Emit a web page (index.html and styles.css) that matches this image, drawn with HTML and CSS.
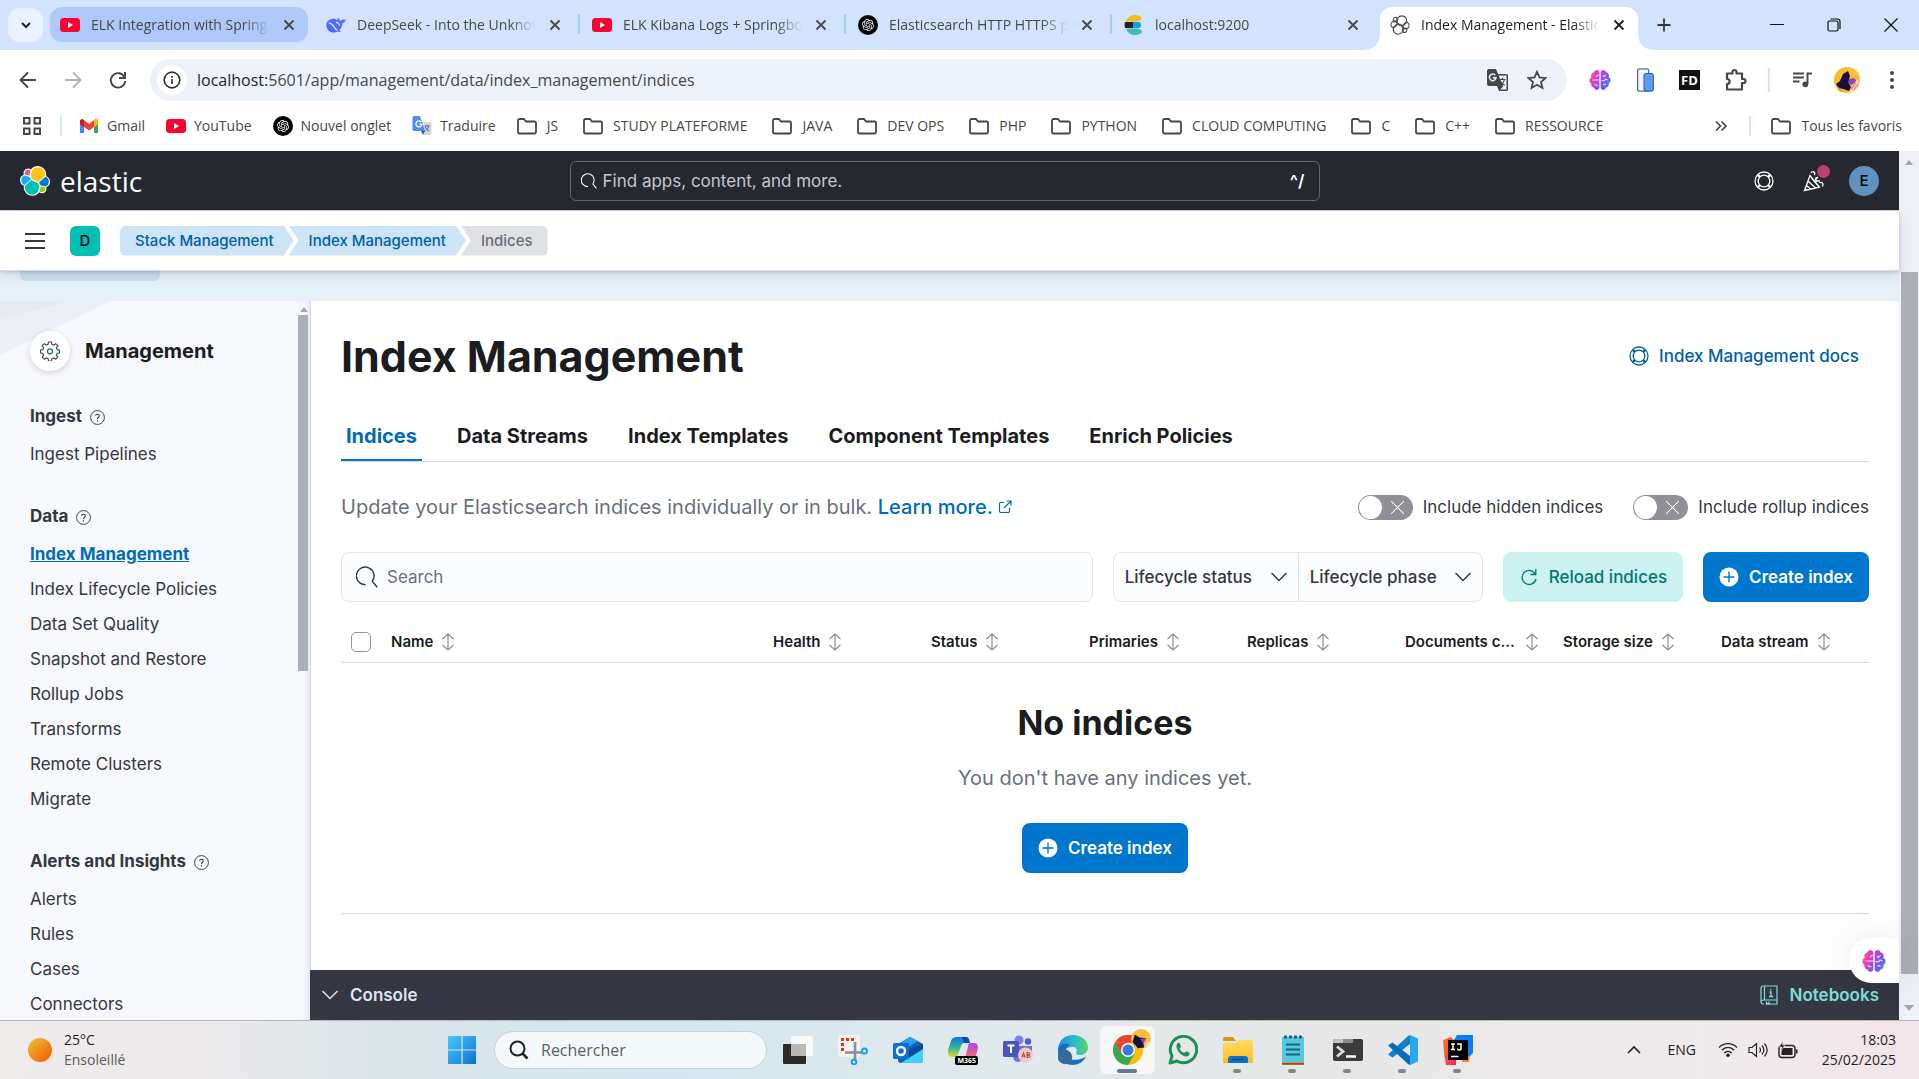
FILE: index.html
```html
<!DOCTYPE html>
<html lang="en">
<head>
<meta charset="utf-8">
<title>Index Management - Elastic</title>
<link rel="stylesheet" href="styles.css">
</head>
<body>
<svg class="sprite" aria-hidden="true">
  <defs>
    <linearGradient id="g-brain-l" x1="0" y1="0" x2="1" y2="1"><stop offset="0" stop-color="#fa9a2a"/><stop offset=".45" stop-color="#ef35c0"/><stop offset="1" stop-color="#6a5cf5"/></linearGradient>
    <linearGradient id="g-brain-r" x1="0" y1="0" x2="1" y2="1"><stop offset="0" stop-color="#d83bd8"/><stop offset=".5" stop-color="#7a55f2"/><stop offset="1" stop-color="#1c9bff"/></linearGradient>
    <linearGradient id="g-sun" x1="0" y1="0" x2="1" y2="1"><stop offset="0" stop-color="#edc52f"/><stop offset=".75" stop-color="#f2700f"/><stop offset="1" stop-color="#ee6510"/></linearGradient>
    <linearGradient id="g-win" x1="0" y1="0" x2="1" y2="1"><stop offset="0" stop-color="#4cc9fb"/><stop offset="1" stop-color="#0873cf"/></linearGradient>
    <linearGradient id="g-edge" x1="0" y1="0" x2="1" y2="0"><stop offset="0" stop-color="#1b8de0"/><stop offset=".6" stop-color="#2cc0c8"/><stop offset="1" stop-color="#5ad65c"/></linearGradient>
    <linearGradient id="g-cop" x1="0" y1="0" x2="0" y2="1"><stop offset="0" stop-color="#1578e0"/><stop offset=".5" stop-color="#25b49a"/><stop offset="1" stop-color="#e8d43a"/></linearGradient>
    <linearGradient id="g-cop2" x1="0" y1="0" x2="0" y2="1"><stop offset="0" stop-color="#a24df0"/><stop offset=".6" stop-color="#f0608a"/><stop offset="1" stop-color="#fa9a55"/></linearGradient>
    <linearGradient id="g-ij" x1="0" y1="0" x2="1" y2="1"><stop offset="0" stop-color="#ff7a1a"/><stop offset="1" stop-color="#fd2160"/></linearGradient>
    <linearGradient id="g-file" x1="0" y1="0" x2="0" y2="1"><stop offset="0" stop-color="#ffdc62"/><stop offset="1" stop-color="#fbbd22"/></linearGradient>

    <symbol id="i-youtube" viewBox="0 0 20 20"><rect y="3" width="20" height="14" rx="3.5" fill="#ff0033"/><path d="M8 7v6l5-3z" fill="#fff"/></symbol>
    <symbol id="i-x" viewBox="0 0 16 16"><path d="M3.5 3.5l9 9m0-9l-9 9" stroke="currentColor" stroke-width="1.8"/></symbol>
    <symbol id="i-deepseek" viewBox="0 0 20 20"><path fill="#4d6bfe" d="M19.7 4.2c-.9.6-1.700.5-2.700.3-1 .1-1.500 1-2 1.400C14 5 12.600 4.300 12.200 2.300c-.8 1-.9 2-.3 3.200C9 2.800 4 3.400 1.600 6.200-.9 9.400.4 14 3.500 16.200c2.600 1.900 6 1.700 8.300.4 1.200.5 2.500.5 3.200-.1-.7-.2-1.200-.6-1.600-1.200 2-2 3-4.500 3-7.200 1.700-.2 3-1.700 3.300-3.900z"/><path d="M2.700 8c3 .3 4.500 2.200 5.700 4.400.8 1.400 1.700 2.300 3 3M10 7.600c1.800-.3 3.600 1 3.400 3.200" fill="none" stroke="#d3e3fd" stroke-width="1.400"/></symbol>
    <symbol id="i-gpt" viewBox="0 0 40 40"><circle cx="20" cy="20" r="20" fill="#050505"/><path transform="translate(8 8)" fill="#fff" d="M22.2819 9.8211a5.9847 5.9847 0 0 0-.5157-4.9108 6.0462 6.0462 0 0 0-6.5098-2.9A6.0651 6.0651 0 0 0 4.9807 4.1818a5.9847 5.9847 0 0 0-3.9977 2.9 6.0462 6.0462 0 0 0 .7427 7.0966 5.98 5.98 0 0 0 .511 4.9107 6.051 6.051 0 0 0 6.5146 2.9001A5.9847 5.9847 0 0 0 13.2599 24a6.0557 6.0557 0 0 0 5.7718-4.2058 5.9894 5.9894 0 0 0 3.9977-2.9001 6.0557 6.0557 0 0 0-.7475-7.0729zm-9.022 12.6081a4.4755 4.4755 0 0 1-2.8764-1.0408l.1419-.0804 4.7783-2.7582a.7948.7948 0 0 0 .3927-.6813v-6.7369l2.02 1.1686a.071.071 0 0 1 .038.052v5.5826a4.504 4.504 0 0 1-4.4945 4.4944zm-9.6607-4.1254a4.4708 4.4708 0 0 1-.5346-3.0137l.142.0852 4.783 2.7582a.7712.7712 0 0 0 .7806 0l5.8428-3.3685v2.3324a.0804.0804 0 0 1-.0332.0615L9.74 19.9502a4.4992 4.4992 0 0 1-6.1408-1.6464zM2.3408 7.8956a4.485 4.485 0 0 1 2.3655-1.9728V11.6a.7664.7664 0 0 0 .3879.6765l5.8144 3.3543-2.0201 1.1685a.0757.0757 0 0 1-.071 0l-4.8303-2.7865A4.504 4.504 0 0 1 2.3408 7.872zm16.5963 3.8558L13.1038 8.364 15.1192 7.2a.0757.0757 0 0 1 .071 0l4.8303 2.7913a4.4944 4.4944 0 0 1-.6765 8.1042v-5.6772a.79.79 0 0 0-.407-.667zm2.0107-3.0231l-.142-.0852-4.7735-2.7818a.7759.7759 0 0 0-.7854 0L9.409 9.2297V6.8974a.0662.0662 0 0 1 .0284-.0615l4.8303-2.7866a4.4992 4.4992 0 0 1 6.6802 4.66zM8.3065 12.863l-2.02-1.1638a.0804.0804 0 0 1-.038-.0567V6.0742a4.4992 4.4992 0 0 1 7.3757-3.4537l-.142.0805L8.704 5.459a.7948.7948 0 0 0-.3927.6813zm1.0976-2.3654l2.602-1.4998 2.6069 1.4998v2.9994l-2.5974 1.4997-2.6067-1.4997Z"/></symbol>
    <symbol id="i-es" viewBox="0 0 20 20"><path d="M2 6.500C3 2.500 6.500 0 11 0c3.300 0 5.800 1.200 7.300 3.300C17 5.300 15 6.500 12.500 6.500z" fill="#f4bd19"/><path d="M1 7h8v6H1a10 10 0 0 1 0-6z" fill="#222"/><path d="M9 7h5a3 3 0 0 1 0 6H9z" fill="#07a5de"/><path d="M2 13.500h10.500c2.500 0 4.500 1.200 5.800 3.200C16.800 18.800 14.300 20 11 20c-4.500 0-8-2.500-9-6.500z" fill="#3cbeb1"/></symbol>
    <symbol id="i-elastic-o" viewBox="0 0 32 32"><g fill="none" stroke="#4a4b4f" stroke-width="1.800"><path d="M12.580 13.787l7.002 3.211 7.066-6.213c1-5-2.800-9.300-7.600-9.300-2.600 0-5 1.300-6.400 3.400L11.490 10.940z"/><path d="M5.333 21.215c-1 4.900 2.700 9.400 7.600 9.400 2.600 0 5-1.300 6.400-3.400l1.160-6.100-1.500-3-7-3.200z"/><path d="M5.300 9.060l4.800 1.140 1.050-5.470C8 2.500 3.800 5.200 5.300 9.060zM4.870 10.210c-4.600 1.700-4.700 8.500 0 10.200l6.700-6-1.200-2.700zM20.870 27.150c3.100 2.300 7.300-.5 5.800-4.400l-4.800-1.100zM21.850 20.560l5.300 1.240c4.600-1.700 4.700-8.500 0-10.200l-6.900 6z"/></g></symbol>
    <symbol id="i-elastic" viewBox="0 0 32 32"><path fill="#FFF" d="M32 16.770c0-2.678-1.664-5.027-4.169-5.907.112-.574.166-1.153.166-1.757C27.997 4.090 23.913 0 18.900 0a9.080 9.080 0 0 0-7.350 3.742 4.800 4.800 0 0 0-2.953-1.005 4.828 4.828 0 0 0-4.530 6.480A6.270 6.270 0 0 0 0 15.103c0 2.690 1.672 5.046 4.188 5.927a9 9 0 0 0-.168 1.757c0 4.999 4.070 9.068 9.067 9.068a9.060 9.060 0 0 0 7.345-3.752 4.800 4.800 0 0 0 2.970 1.030 4.828 4.828 0 0 0 4.530-6.481A6.270 6.270 0 0 0 32 16.770"/><path fill="#FEC514" d="M12.580 13.787l7.002 3.211 7.066-6.213a7.800 7.800 0 0 0 .152-1.557c0-4.287-3.476-7.775-7.748-7.775a7.720 7.720 0 0 0-6.385 3.378L11.490 10.940z"/><path fill="#00BFB3" d="M5.333 21.215a7.900 7.900 0 0 0-.152 1.570c0 4.300 3.488 7.798 7.775 7.798 2.574 0 4.985-1.287 6.431-3.431l1.160-6.036-1.555-2.982-7.030-3.213z"/><path fill="#F04E98" d="M5.288 9.067l4.800 1.137 1.050-5.473a3.790 3.790 0 0 0-2.296-.775 3.810 3.810 0 0 0-3.800 3.810c0 .450.089.900.246 1.300"/><path fill="#1BA9F5" d="M4.870 10.210a5.470 5.470 0 0 0-3.536 5.120 5.460 5.460 0 0 0 3.490 5.096l6.733-6.106-1.235-2.647z"/><path fill="#93C90E" d="M20.875 27.152a3.800 3.800 0 0 0 2.280.776 3.810 3.810 0 0 0 3.800-3.810c0-.462-.078-.914-.237-1.332l-4.790-1.125z"/><path fill="#07C" d="M21.848 20.563l5.280 1.236a5.480 5.480 0 0 0 3.535-5.120 5.460 5.460 0 0 0-3.493-5.095l-6.905 6.063z"/></symbol>
    <symbol id="i-folder" viewBox="0 0 20 20"><path d="M1 4.500A1.500 1.500 0 0 1 2.500 3H7l2 2.500h8.500A1.500 1.500 0 0 1 19 7v9a1.500 1.500 0 0 1-1.500 1.500h-15A1.500 1.500 0 0 1 1 16z" fill="none" stroke="currentColor" stroke-width="1.800"/></symbol>
    <symbol id="i-gmail" viewBox="0 0 20 20"><path d="M1 17V5l4 3v9z" fill="#4285f4"/><path d="M19 17V5l-4 3v9z" fill="#34a853"/><path d="M1 5.500C1 3 3.500 2.500 5 4l5 4 5-4c1.500-1.500 4-1 4 1.500V8l-9 6.500L1 8z" fill="#ea4335"/><path d="M15 4c1.500-1.500 4-1 4 1.500V8l-4 3z" fill="#fbbc04"/><path d="M1 5.500C1 3 3.500 2.500 5 4v7L1 8z" fill="#c5221f"/></symbol>
    <symbol id="i-gtrans" viewBox="0 0 20 20"><path d="M9 6h9a1.500 1.500 0 0 1 1.500 1.500v10A1.500 1.500 0 0 1 18 19h-6z" fill="#d5d7da"/><path d="M2 0h6l5 15H2a1.500 1.500 0 0 1-1.500-1.500v-12A1.500 1.500 0 0 1 2 0z" fill="#4d8df6"/><path d="M9 15h4l-2 4z" fill="#2a56c6"/><path d="M9.300 6.100a3 3 0 1 0 .6 2H7.300" fill="none" stroke="#fff" stroke-width="1.300"/><path d="M12.500 10h5M15 9v1m1.800 0c-.3 2-1.800 4-3.300 5m-.2-4c.5 1.600 2 3.200 3.600 4" fill="none" stroke="#5f6368" stroke-width="1"/></symbol>
    <symbol id="i-trans" viewBox="0 0 22 24"><path d="M2 1h7l2 5h8.500A1.500 1.500 0 0 1 21 7.500v14a1.500 1.500 0 0 1-1.500 1.500H12l-2-5H2a2 2 0 0 1-2-2V3a2 2 0 0 1 2-2z" fill="#474747"/><path d="M11.700 7.500H19.500v14h-6.300l3-3z" fill="#ecf0fa"/><path d="M8.200 7.200a3.300 3.300 0 1 0 .8 2.500H5.700" fill="none" stroke="#ecf0fa" stroke-width="1.500"/><path d="M12.500 11.500h6M15.500 10v1.500m2 0c-.4 2.200-2 4.500-4 5.700m-.3-4.200c.6 1.600 2.400 3.400 4.600 4.200" fill="none" stroke="#474747" stroke-width="1.200"/></symbol>
    <symbol id="i-brain" viewBox="0 0 24 24"><path d="M11.300 3.200C10 0 6 .5 5.300 3.500 2.300 4 1.700 7 2.700 8.700-.3 10-.3 14.500 2.500 15.700c-.6 2.500 1 4.500 3 4.700.8 3 4.800 3.300 5.800.3z" fill="url(#g-brain-l)"/><path d="M12.700 3.200C14 0 18 .5 18.700 3.500c3 .5 3.600 3.500 2.600 5.200 3 1.300 3 5.800.2 7 .6 2.500-1 4.500-3 4.700-.8 3-4.800 3.300-5.800.3z" fill="url(#g-brain-r)"/><path d="M11 6.500c-1.500 0-2.700.7-3 2M3.500 12H11M6 16c.5 1.700 2 2 3.500 1.500M15 7l1.500 1.500L18.500 6M13.500 12.500c2 0 2 1 3.500 0l1-1.500 2.500 1M15.500 17.500l1.500-1 1.500 1" fill="none" stroke="#fff" stroke-opacity=".85" stroke-width="1.100"/></symbol>
    <symbol id="i-phone" viewBox="0 0 20 26"><rect x="2" y="1" width="12" height="24" rx="2" fill="#f3f6fc" stroke="#53709e" stroke-width="1.500"/><rect x="9" y="6" width="10" height="19" rx="2" fill="#5b9df5" stroke="#2d5fae" stroke-width="1.200"/></symbol>
    <symbol id="i-puzzle" viewBox="0 0 24 24"><path d="M3 5.500h5.500V4a2 2 0 0 1 4 0v1.500H18V11h1.500a2 2 0 0 1 0 4H18v6.500H3V16c3.500 0 3.500-5 0-5z" fill="none" stroke="#474747" stroke-width="2.200" stroke-linejoin="round"/></symbol>
    <symbol id="i-help" viewBox="0 0 16 16"><g fill="none" stroke="currentColor"><circle cx="8" cy="8" r="7.400"/><path d="M6 6.200C6 4 10 4 10 6.300 10 7.700 8 7.800 8 9.500M8 11v1.300" stroke-width="1.100"/></g></symbol>
    <symbol id="i-ring" viewBox="0 0 20 20"><g fill="none" stroke="currentColor" stroke-width="1.300"><circle cx="10" cy="10" r="9"/><circle cx="10" cy="10" r="5.800"/></g><g fill="none" stroke="currentColor" stroke-width="2.400"><path d="M3.800 3.800l2.100 2.100M16.200 3.800l-2.100 2.100M3.800 16.200l2.100-2.100M16.200 16.200l-2.100-2.100"/></g></symbol>
    <symbol id="i-search" viewBox="0 0 20 20"><path d="M8.700 17A8 8 0 1 1 14.800 13.800L19.300 19.300" fill="none" stroke="currentColor" stroke-width="1.300"/></symbol>
    <symbol id="i-down" viewBox="0 0 16 16"><path d="M1 4.500l7 7 7-7" fill="none" stroke="currentColor" stroke-width="1.500" stroke-linecap="round" stroke-linejoin="round"/></symbol>
    <symbol id="i-sort" viewBox="0 0 14 18"><path d="M7 1v16M1.500 6L7 1l5.500 5M1.500 12L7 17l5.500-5" fill="none" stroke="#8a8d94" stroke-width="1.200"/></symbol>
    <symbol id="i-plus" viewBox="0 0 20 20"><circle cx="10" cy="10" r="9.500" fill="#fff"/><path d="M10 4.500v11M4.500 10h11" stroke="#0077cc" stroke-width="1.400"/></symbol>
    <symbol id="i-reload" viewBox="0 0 20 20"><path d="M16.500 7.500A7 7 0 1 0 17 12M16.800 2v5.500h-5.300" fill="none" stroke="currentColor" stroke-width="1.300"/></symbol>
  </defs>
</svg>

<header class="browser">
  <div class="tabstrip">
    <button class="tab-menu" aria-label="Search tabs"><svg width="14" height="14" viewBox="0 0 14 14"><path d="M3 5l4 4 4-4" fill="none" stroke="#1f1f1f" stroke-width="2"/></svg></button>
    <div class="tabs">
      <div class="tab tab-hover"><svg class="fav"><use href="#i-youtube"/></svg><span class="tab-title">ELK Integration with Spring Boot</span><button class="tab-x" aria-label="Close"><svg><use href="#i-x"/></svg></button></div>
      <div class="tab"><svg class="fav"><use href="#i-deepseek"/></svg><span class="tab-title">DeepSeek - Into the Unknown</span><button class="tab-x" aria-label="Close"><svg><use href="#i-x"/></svg></button></div>
      <div class="tab tab-sep"><svg class="fav"><use href="#i-youtube"/></svg><span class="tab-title">ELK Kibana Logs + Springboot</span><button class="tab-x" aria-label="Close"><svg><use href="#i-x"/></svg></button></div>
      <div class="tab tab-sep"><svg class="fav"><use href="#i-gpt"/></svg><span class="tab-title">Elasticsearch HTTP HTTPS prob</span><button class="tab-x" aria-label="Close"><svg><use href="#i-x"/></svg></button></div>
      <div class="tab tab-sep"><svg class="fav"><use href="#i-es"/></svg><span class="tab-title">localhost:9200</span><button class="tab-x" aria-label="Close"><svg><use href="#i-x"/></svg></button></div>
      <div class="tab tab-active"><svg class="fav"><use href="#i-elastic-o"/></svg><span class="tab-title">Index Management - Elastic</span><button class="tab-x" aria-label="Close"><svg><use href="#i-x"/></svg></button></div>
    </div>
    <button class="tab-new" aria-label="New tab"><svg width="16" height="16" viewBox="0 0 16 16"><path d="M8 1.500v13M1.500 8h13" stroke="#333" stroke-width="1.800"/></svg></button>
    <div class="win-controls">
      <button aria-label="Minimize"><svg width="14" height="14" viewBox="0 0 14 14"><path d="M0 6.500h14" stroke="#111"/></svg></button>
      <button aria-label="Restore"><svg width="14" height="14" viewBox="0 0 14 14"><g fill="none" stroke="#111" stroke-width="1.200"><rect x="1" y="3" width="10" height="10" rx="1.500"/><path d="M3.500 1h7A2.500 2.500 0 0 1 13 3.500V11"/></g></svg></button>
      <button aria-label="Close window"><svg width="14" height="14" viewBox="0 0 14 14"><path d="M.5.500l13 13m0-13l-13 13" stroke="#111" stroke-width="1.200"/></svg></button>
    </div>
  </div>

  <div class="toolbar">
    <nav class="nav-btns">
      <button aria-label="Back"><svg width="20" height="20" viewBox="0 0 20 20"><path d="M18 10H3m7-7.500L2.500 10l7.500 7.500" fill="none" stroke="#474747" stroke-width="1.900"/></svg></button>
      <button aria-label="Forward"><svg width="20" height="20" viewBox="0 0 20 20"><path d="M2 10h15m-7-7.500l7.500 7.500-7.500 7.500" fill="none" stroke="#b3b3b3" stroke-width="1.900"/></svg></button>
      <button aria-label="Reload"><svg width="20" height="20" viewBox="0 0 20 20"><path d="M16.500 7.200A7.200 7.200 0 1 0 17.200 11M17 2v6h-6" fill="none" stroke="#474747" stroke-width="1.900"/></svg></button>
    </nav>
    <div class="omnibox">
      <button class="site-info" aria-label="Site information"><svg width="18" height="18" viewBox="0 0 18 18"><circle cx="9" cy="9" r="7.800" fill="none" stroke="#333" stroke-width="1.700"/><path d="M9 8v5M9 5v1.700" stroke="#333" stroke-width="1.700"/></svg></button>
      <span class="url"><b>localhost:</b>5601/app/management/data/index_management/indices</span>
      <button aria-label="Translate"><svg width="22" height="24"><use href="#i-trans"/></svg></button>
      <button aria-label="Bookmark"><svg width="20" height="20" viewBox="0 0 20 20"><path d="M10 1.800l2.500 5.600 6.100.6-4.600 4 1.400 6-5.400-3.200L4.600 18 6 12 1.400 8l6.100-.6z" fill="none" stroke="#474747" stroke-width="1.800"/></svg></button>
    </div>
    <div class="extensions">
      <button aria-label="AI assistant"><svg width="22" height="22"><use href="#i-brain"/></svg></button>
      <button aria-label="Mobile simulator"><svg width="20" height="24"><use href="#i-phone"/></svg></button>
      <button aria-label="FD" class="fd">FD</button>
      <button aria-label="Extensions"><svg width="24" height="24"><use href="#i-puzzle"/></svg></button>
    </div>
    <div class="profile">
      <button aria-label="Media"><svg width="20" height="20" viewBox="0 0 20 20"><path d="M1 3.500h11M1 7.500h11M1 11.500h6.500M15.500 14V3.500H20" fill="none" stroke="#474747" stroke-width="1.900"/><circle cx="13.300" cy="14.300" r="2.900" fill="#474747"/></svg></button>
      <button aria-label="Profile"><svg width="26" height="26" viewBox="0 0 26 26"><circle cx="13" cy="13" r="13" fill="#fbbe2e"/><path d="M11 13l9-2 3 3-6 4z" fill="#8b3fd6"/><path d="M2 17l4-3 3-7 5-3 2 5-2 6 3 5-2 4-6-2-4-1z" fill="#18123a"/><path d="M15 25l8-13 2 4-3 7-5 3z" fill="#f6d5c4"/><path d="M17 23l5-8m-2 8l4-6" stroke="#e8734a" stroke-width="1"/><path d="M1 17l9 8-5-1z" fill="#f08b2b"/></svg></button>
      <button aria-label="Menu"><svg width="20" height="20" viewBox="0 0 20 20"><g fill="#474747"><circle cx="10" cy="3" r="2"/><circle cx="10" cy="10" r="2"/><circle cx="10" cy="17" r="2"/></g></svg></button>
    </div>
  </div>

  <nav class="bookmarks">
    <button class="apps" aria-label="Apps"><svg width="18" height="18" viewBox="0 0 18 18"><g fill="none" stroke="#474747" stroke-width="2"><path d="M1 1h5.500v5.500H1zM11.500 1H17v5.500h-5.500zM1 11.500h5.500V17H1zM11.500 11.500H17V17h-5.500z"/></g></svg></button>
    <ul class="bm-list">
      <li><a href="#"><svg class="fav"><use href="#i-gmail"/></svg>Gmail</a></li>
      <li><a href="#"><svg class="fav"><use href="#i-youtube"/></svg>YouTube</a></li>
      <li><a href="#"><svg class="fav"><use href="#i-gpt"/></svg>Nouvel onglet</a></li>
      <li><a href="#"><svg class="fav"><use href="#i-gtrans"/></svg>Traduire</a></li>
      <li class="folder"><a href="#"><svg class="fav"><use href="#i-folder"/></svg>JS</a></li>
      <li class="folder"><a href="#"><svg class="fav"><use href="#i-folder"/></svg>STUDY PLATEFORME</a></li>
      <li class="folder"><a href="#"><svg class="fav"><use href="#i-folder"/></svg>JAVA</a></li>
      <li class="folder"><a href="#"><svg class="fav"><use href="#i-folder"/></svg>DEV OPS</a></li>
      <li class="folder"><a href="#"><svg class="fav"><use href="#i-folder"/></svg>PHP</a></li>
      <li class="folder"><a href="#"><svg class="fav"><use href="#i-folder"/></svg>PYTHON</a></li>
      <li class="folder"><a href="#"><svg class="fav"><use href="#i-folder"/></svg>CLOUD COMPUTING</a></li>
      <li class="folder"><a href="#"><svg class="fav"><use href="#i-folder"/></svg>C</a></li>
      <li class="folder"><a href="#"><svg class="fav"><use href="#i-folder"/></svg>C++</a></li>
      <li class="folder"><a href="#"><svg class="fav"><use href="#i-folder"/></svg>RESSOURCE</a></li>
    </ul>
    <button class="more" aria-label="More bookmarks"><svg width="12" height="12" viewBox="0 0 12 12"><path d="M1 1.500L5.500 6 1 10.500M6.500 1.500L11 6l-4.500 4.500" fill="none" stroke="#474747" stroke-width="1.700"/></svg></button>
    <a class="all-bm" href="#"><svg class="fav"><use href="#i-folder"/></svg>Tous les favoris</a>
  </nav>
</header>

<div class="viewport">
  <div class="kibana">
    <header class="k-top">
      <a class="k-logo" href="#"><svg width="30" height="30"><use href="#i-elastic"/></svg><span>elastic</span></a>
      <label class="k-search"><svg width="16" height="16"><use href="#i-search"/></svg><input type="text" placeholder="Find apps, content, and more." aria-label="Find apps, content, and more."><kbd>^/</kbd></label>
      <div class="k-actions">
        <button aria-label="Help"><svg width="20" height="20"><use href="#i-ring"/></svg></button>
        <button class="news" aria-label="News"><svg width="22" height="22" viewBox="0 0 22 22"><g fill="none" stroke="#fff" stroke-width="1.300"><path d="M1.500 20.500L7 5.500l9.500 11.500zM5 11l7.500 7M3.500 15.500l4 3.500M8.500 8l6 7M8 3c1.500-2.500 4.500-1 3.500 2M16.500 13c2.500-1.500 4.500.5 3 3.500M12 10l3-3M13 7v4h4"/></g></svg><span class="dot"></span></button>
        <button class="avatar" aria-label="Account">E</button>
      </div>
    </header>
    <div class="k-sub">
      <button class="burger" aria-label="Toggle navigation"><svg width="20" height="16" viewBox="0 0 20 16"><path d="M0 1h20M0 8h20M0 15h20" stroke="#343741" stroke-width="2"/></svg></button>
      <button class="space" aria-label="Default space">D</button>
      <nav class="crumbs" aria-label="Breadcrumbs">
        <a href="#">Stack Management</a>
        <a href="#">Index Management</a>
        <span>Indices</span>
      </nav>
    </div>
    <div class="banner"><button class="banner-btn" aria-label="Dismiss"></button></div>
    <div class="k-body">
      <aside class="side">
        <div class="side-inner">
          <h2 class="side-title"><span class="side-icon"><svg width="20" height="20" viewBox="0 0 20 20"><path d="M8.500 1h3l.4 2.300 1.900.8 1.900-1.400 2.100 2.100-1.400 1.900.8 1.900 2.300.4v3l-2.300.4-.8 1.900 1.400 1.900-2.100 2.100-1.900-1.400-1.900.8-.4 2.300h-3l-.4-2.300-1.900-.8-1.900 1.400-2.100-2.100 1.400-1.900-.8-1.900L.5 12V9l2.300-.4.8-1.900-1.400-1.900 2.100-2.100 1.900 1.400 1.900-.8z" fill="none" stroke="#4a4d57" stroke-width="1.200"/><circle cx="10" cy="10.300" r="2.500" fill="none" stroke="#017d73" stroke-width="1.300"/></svg></span>Management</h2>
          <section><h3>Ingest <svg width="15" height="15"><use href="#i-help"/></svg></h3>
            <a href="#">Ingest Pipelines</a></section>
          <section><h3>Data <svg width="15" height="15"><use href="#i-help"/></svg></h3>
            <a href="#" class="current">Index Management</a>
            <a href="#">Index Lifecycle Policies</a>
            <a href="#">Data Set Quality</a>
            <a href="#">Snapshot and Restore</a>
            <a href="#">Rollup Jobs</a>
            <a href="#">Transforms</a>
            <a href="#">Remote Clusters</a>
            <a href="#">Migrate</a></section>
          <section><h3>Alerts and Insights <svg width="15" height="15"><use href="#i-help"/></svg></h3>
            <a href="#">Alerts</a>
            <a href="#">Rules</a>
            <a href="#">Cases</a>
            <a href="#">Connectors</a></section>
        </div>
        <div class="side-scroll"><i class="arrow-up"></i><i class="side-thumb"></i></div>
      </aside>
      <main class="main">
        <div class="panel">
          <div class="title-row">
            <h1>Index Management</h1>
            <a class="docs" href="#"><svg width="20" height="20"><use href="#i-ring"/></svg>Index Management docs</a>
          </div>
          <nav class="k-tabs">
            <a href="#" class="on">Indices</a><a href="#">Data Streams</a><a href="#">Index Templates</a><a href="#">Component Templates</a><a href="#">Enrich Policies</a>
          </nav>
          <div class="desc-row">
            <p>Update your Elasticsearch indices individually or in bulk. <a href="#">Learn more. <svg width="14" height="14" viewBox="0 0 14 14"><path d="M6 2.500H3A1.500 1.500 0 0 0 1.500 4v7A1.500 1.500 0 0 0 3 12.500h7a1.500 1.500 0 0 0 1.500-1.500V8M8.500 1H13v4.500M13 1L6 8" fill="none" stroke="currentColor" stroke-width="1.200"/></svg></a></p>
            <label class="switch"><input type="checkbox" role="switch">Include hidden indices</label>
            <label class="switch"><input type="checkbox" role="switch">Include rollup indices</label>
          </div>
          <div class="filter-row">
            <label class="search"><svg width="22" height="22" viewBox="0 0 20 20"><use href="#i-search"/></svg><input type="search" placeholder="Search" aria-label="Search"></label>
            <div class="filters"><button>Lifecycle status<svg width="16" height="16"><use href="#i-down"/></svg></button><button>Lifecycle phase<svg width="16" height="16"><use href="#i-down"/></svg></button></div>
            <button class="btn btn-soft"><svg width="20" height="20"><use href="#i-reload"/></svg>Reload indices</button>
            <button class="btn btn-fill"><svg width="20" height="20"><use href="#i-plus"/></svg>Create index</button>
          </div>
          <table class="grid">
            <colgroup><col class="c-check"><col class="c-name"><col><col><col><col><col><col><col></colgroup>
            <thead><tr>
              <th><input type="checkbox" aria-label="Select all rows"></th>
              <th><button><span>Name</span><svg width="14" height="18"><use href="#i-sort"/></svg></button></th>
              <th><button><span>Health</span><svg width="14" height="18"><use href="#i-sort"/></svg></button></th>
              <th><button><span>Status</span><svg width="14" height="18"><use href="#i-sort"/></svg></button></th>
              <th><button><span>Primaries</span><svg width="14" height="18"><use href="#i-sort"/></svg></button></th>
              <th><button><span>Replicas</span><svg width="14" height="18"><use href="#i-sort"/></svg></button></th>
              <th><button><span>Documents count</span><svg width="14" height="18"><use href="#i-sort"/></svg></button></th>
              <th><button><span>Storage size</span><svg width="14" height="18"><use href="#i-sort"/></svg></button></th>
              <th><button><span>Data stream</span><svg width="14" height="18"><use href="#i-sort"/></svg></button></th>
            </tr></thead>
            <tbody><tr><td colspan="9">
              <h2>No indices</h2>
              <p>You don't have any indices yet.</p>
              <button class="btn btn-fill"><svg width="20" height="20"><use href="#i-plus"/></svg>Create index</button>
            </td></tr></tbody>
          </table>
        </div>
        <footer class="console">
          <button><svg width="16" height="16"><use href="#i-down"/></svg>Console</button>
          <button class="nb"><svg width="18" height="20" viewBox="0 0 18 20"><path d="M3 1h14v14H3.500A2.500 2.500 0 0 0 1 17.200V3a2 2 0 0 1 2-2zM4.500 1v14M1 17.200A2 2 0 0 0 3 19h1M9 19h8v-4M6.500 16.500v3l1.300-1 1.200 1v-3" fill="none" stroke="currentColor" stroke-width="1.200"/><path d="M9.500 7h1.500v4.500M9 11.500h4M10.700 4v1.500" fill="none" stroke="currentColor" stroke-width="1.300"/></svg>Notebooks</button>
        </footer>
        <button class="assistant" aria-label="Assistant"><svg width="26" height="24"><use href="#i-brain"/></svg></button>
      </main>
    </div>
  </div>
  <div class="page-scroll"><i class="arrow-up"></i><i class="page-thumb"></i><i class="arrow-down"></i></div>
</div>

<footer class="taskbar">
  <div class="weather"><svg width="24" height="24" viewBox="0 0 24 24"><circle cx="12" cy="12" r="12" fill="url(#g-sun)"/></svg><p>25°C<br><span>Ensoleillé</span></p></div>
  <div class="dock">
    <button aria-label="Start"><svg width="30" height="30" viewBox="0 0 30 30"><path d="M1 1h13.400v13.400H1zM15.600 1H29v13.400H15.600zM1 15.600h13.400V29H1zM15.600 15.600H29V29H15.600z" fill="url(#g-win)"/></svg></button>
    <label class="t-search"><svg width="20" height="20" viewBox="0 0 20 20"><circle cx="8.500" cy="8.500" r="7" fill="none" stroke="#222" stroke-width="2"/><path d="M13.500 13.500l5 5" stroke="#222" stroke-width="2.500"/></svg><input type="text" placeholder="Rechercher" aria-label="Rechercher"></label>
    <button aria-label="Task view"><svg width="30" height="30" viewBox="0 0 30 30"><rect x="0" y="9" width="23" height="20" rx="1" fill="#2b2a29"/><rect x="8" y="1" width="22" height="20" rx="1" fill="#fafafa" fill-opacity=".95"/><rect x="8" y="9" width="15" height="12" fill="#b9bab8"/></svg></button>
    <button aria-label="Snipping tool"><svg width="30" height="30" viewBox="0 0 30 30"><rect width="22" height="22" rx="2" fill="#f2f2f2"/><path d="M16 4.500H4.500V16" fill="none" stroke="#d83b01" stroke-width="3" stroke-dasharray="3 2"/><path d="M17 7v17M7 17.500h17" stroke="#8a9097" stroke-width="2.600"/><circle cx="26.500" cy="16" r="2.500" fill="none" stroke="#1a9fe8" stroke-width="2"/><circle cx="16" cy="27" r="2.300" fill="none" stroke="#1a9fe8" stroke-width="2"/></svg></button>
    <button aria-label="Outlook"><svg width="30" height="30" viewBox="0 0 30 30"><path d="M5 9L17 2l13 7v16a3 3 0 0 1-3 3H8a3 3 0 0 1-3-3z" fill="#0f5fb8"/><path d="M5 9l12-7 8 4-14 9z" fill="#2f9af0"/><path d="M9 18L30 9v8L16 26z" fill="#0a4a94"/><path d="M8 28l22-14v11a3 3 0 0 1-3 3z" fill="#41d0f8"/><rect y="8" width="16" height="16" rx="1.500" fill="#0a6ed1"/><circle cx="8" cy="16" r="4" fill="none" stroke="#fff" stroke-width="2.400"/></svg></button>
    <button aria-label="Microsoft 365" class="m365"><svg width="30" height="30" viewBox="0 0 30 30"><path d="M8 2h9c3 0 4 3 5 6h-6c-2 0-3 2-4 6l-3 8H5c-4 0-6-3-5-7L3 6c1-3 3-4 5-4z" fill="url(#g-cop)"/><path d="M22 8h4c3 0 4 2 4 5l-3 11c-1 3-3 4-5 4h-9c2 0 3-2 4-5l3-11c0-3 1-4 2-4z" fill="url(#g-cop2)"/><path d="M14 2h4c3 0 3 3 4 6h-6z" fill="#1747b5"/></svg><span>M365</span></button>
    <button aria-label="Teams"><svg width="30" height="30" viewBox="0 0 30 30"><circle cx="16" cy="5" r="4.500" fill="#7b83eb"/><circle cx="25" cy="6.500" r="3.200" fill="#5059c9"/><path d="M10 11h19v8a6 6 0 0 1-7 6l-7 2a6 6 0 0 1-5-6z" fill="#6a72dd"/><rect y="6" width="16" height="16" rx="1.500" fill="#4b53bc"/><path d="M4.500 10.500h7M8 10.500V18" stroke="#fff" stroke-width="2"/><circle cx="22.500" cy="20" r="7.500" fill="#f2c9c0"/><path d="M19 22.500l1.500-5 1.500 5m-2.500-1.500h2M24 17.500v5h1.500a1 1 0 0 0 0-2.500H24h1.300a1 1 0 0 0 0-2.500z" fill="none" stroke="#8a3f37" stroke-width="1"/></svg></button>
    <button aria-label="Edge"><svg width="30" height="30" viewBox="0 0 30 30"><path d="M0 14C1 5 7 0 15 0c9 0 15 6 15 12.500 0 5-4 7.500-8 7.500-3 0-4.500-1-3.500-3 1-3-1-5-4-5C8 12 2 16 0 20z" fill="url(#g-edge)"/><path d="M0 14c2-5 8-6.500 12-4-3 1-5 5-4 9 1 6 8 8 20 3-3 5-8 8-13 8C6 30 0 24 0 14z" fill="#1570c0"/><circle cx="7" cy="22" r="7.200" fill="#366a9e"/></svg></button>
    <button aria-label="Chrome" class="run focus"><svg width="30" height="30" viewBox="0 0 30 30"><circle cx="15" cy="15" r="15" fill="#fbbc05"/><path d="M2 7.500A15 15 0 0 1 28 7.500H15z" fill="#ea4335"/><path d="M2 7.500A15 15 0 0 0 15 30l6.500-11.300H8.500z" fill="#34a853"/><path d="M2 7.500L8.500 18.700 15 7.500z" fill="#ea4335"/><circle cx="15" cy="15" r="7" fill="#fff"/><circle cx="15" cy="15" r="5.500" fill="#3b78e7"/></svg><svg class="pbadge" width="20" height="20" viewBox="0 0 26 26"><circle cx="13" cy="13" r="13" fill="#f6bd3b"/><path d="M2 17l3-10 6 4 8 1-3 6 1 6-8 1z" fill="#18123a"/><path d="M12 13l8-1-4 7z" fill="#8b3fd6"/><path d="M17 24l6-9 2 3-3 5z" fill="#f6d5c4"/></svg></button>
    <button aria-label="WhatsApp"><svg width="30" height="30" viewBox="0 0 30 30"><path d="M2 28l2-7A13.200 13.200 0 1 1 9 26z" fill="none" stroke="#1f8f58" stroke-width="3" stroke-linejoin="round"/><path d="M9 9c1-2 3-1.500 3 0l1 2.500-1.500 2c1 2.200 2.500 3.700 4.800 4.600l2-1.800 3 1.500c1 1-.5 3.600-3 3.800C13 21 8.500 15.500 8.500 11z" fill="#1f8f58"/></svg></button>
    <button aria-label="Explorer" class="run"><svg width="30" height="30" viewBox="0 0 30 30"><path d="M0 4a2 2 0 0 1 2-2h8l3 4H0z" fill="#d59a13"/><path d="M0 8h13l2-3h13a2 2 0 0 1 2 2v21H0z" fill="url(#g-file)"/><path d="M5 28v-4a3 3 0 0 1 3-3h14a3 3 0 0 1 3 3v4z" fill="#0f74c9"/><path d="M9 24.500h12" stroke="#0a4f93" stroke-width="1.500"/></svg></button>
    <button aria-label="Notepad" class="run"><svg width="30" height="30" viewBox="0 0 30 30"><path d="M4 2h22v25H4z" fill="#58c7e0"/><path d="M4 27.500h22v2.300H4z" fill="#a3480b"/><path d="M8 9.500h14M8 14.500h14M8 19.500h14" stroke="#14657d" stroke-width="2"/><g fill="#14657d"><circle cx="7.500" cy="2" r="1.800"/><circle cx="12.500" cy="2" r="1.800"/><circle cx="17.500" cy="2" r="1.800"/><circle cx="22.500" cy="2" r="1.800"/></g></svg></button>
    <button aria-label="Terminal" class="run"><svg width="30" height="30" viewBox="0 0 30 30"><rect y="4" width="30" height="22" rx="2" fill="#3a3a3a"/><path d="M2 4h8v4H0V6a2 2 0 0 1 2-2z" fill="#c2c2c2"/><path d="M10 4h10v4H10z" fill="#8a8a8a"/><path d="M4 11.500l6 5-6 5" fill="none" stroke="#ddd" stroke-width="2.800"/><path d="M13 21.500h10" stroke="#fff" stroke-width="2.500"/></svg></button>
    <button aria-label="VS Code" class="run"><svg width="30" height="30" viewBox="0 0 30 30"><path d="M22 0l8 3.500v23L22 30z" fill="#29a8f0"/><path d="M22 0v9L4.500 22.500 0 19.500 20 1z" fill="#0f80cc"/><path d="M22 30v-9L4.500 7.500 0 10.500 20 29z" fill="#0a6cb5"/></svg></button>
    <button aria-label="IntelliJ" class="run"><svg width="30" height="30" viewBox="0 0 30 30"><path d="M0 5l8-3 5 6v22H3L1 18z" fill="url(#g-ij)"/><path d="M14 0h16v18l-9 9L11 5z" fill="#087cfa"/><path d="M18 27h8l1-7z" fill="#fc801d"/><rect x="5" y="5" width="20" height="20" fill="#000"/><path d="M8 9h4M10 9v5.500M8 14.500h4M14 9h4v4a1.600 1.600 0 0 1-3.500.5M8 21.500h7.500" fill="none" stroke="#fff" stroke-width="1.500"/></svg></button>
  </div>
  <div class="tray">
    <button aria-label="Hidden icons"><svg width="14" height="10" viewBox="0 0 14 10"><path d="M1 8l6-6 6 6" fill="none" stroke="#222" stroke-width="1.600"/></svg></button>
    <span class="lang">ENG</span>
    <div class="status">
      <svg width="20" height="18" viewBox="0 0 20 18"><g fill="none" stroke="#222" stroke-width="1.300"><path d="M1 6.500c5-5.300 13-5.300 18 0M3.700 9.300c3.600-3.800 9-3.800 12.600 0M6.300 12c2.200-2.300 5.200-2.300 7.400 0"/></g><circle cx="10" cy="14.300" r="1.700" fill="#222"/></svg>
      <svg width="20" height="18" viewBox="0 0 20 18"><path d="M1 6.500h3L8.500 2.500v13L4 11.500H1zM11.500 6.500c1.200 1.500 1.200 3.500 0 5M14 4.500c2.300 2.700 2.300 6.300 0 9M16.500 2.500c3.300 4 3.300 9 0 13" fill="none" stroke="#222" stroke-width="1.200"/></svg>
      <svg width="20" height="18" viewBox="0 0 20 18"><rect x="1" y="4.500" width="16" height="12" rx="3" fill="none" stroke="#222" stroke-width="1.400"/><rect x="3.500" y="7" width="11" height="7" fill="#222"/><path d="M18 8.500h1.500v4H18z" fill="#222"/><path d="M5 0L1 6h3l-1 4 4-6H4.500z" fill="#222" stroke="#efe9eb" stroke-width=".6"/></svg>
    </div>
    <p class="clock">18:03<br>25/02/2025</p>
  </div>
</footer>
</body>
</html>
```
FILE: styles.css
```css
* { box-sizing: border-box; }
body {
  margin: 0;
  height: 100vh;
  display: flex;
  flex-direction: column;
  overflow: hidden;
  font-family: "Inter", "Liberation Sans", sans-serif;
  color: #343741;
}
h1, h2, h3, p, ul { margin: 0; padding: 0; }
ul { list-style: none; }
button { border: 0; background: none; padding: 0; font: inherit; color: inherit; display: flex; align-items: center; justify-content: center; }
input { font: inherit; color: inherit; }
a { color: inherit; text-decoration: none; }
svg { display: block; flex: none; }
.sprite { position: absolute; width: 0; height: 0; }

/* Browser chrome */
.browser, .taskbar { font-family: "Open Sans", "Noto Sans", sans-serif; flex: none; }
.browser { background: #fff; color: #474747; font-size: 14px; }
.tabstrip { display: flex; align-items: center; height: 50px; padding-left: 8px; background: #d3e3fd; }
.tab-menu { width: 35px; height: 34px; border-radius: 12px; background: #ebf1fe; }
.tabs { display: flex; gap: 8px; align-self: stretch; align-items: flex-start; padding: 7px 0 0 7px; flex: 0 1 1595px; min-width: 0; }
.tab { position: relative; display: flex; align-items: center; gap: 11px; flex: 1 1 0; min-width: 0; height: 35px; padding: 0 11px 0 10px; border-radius: 12px; }
.tab-hover { background: #aec9fa; }
.tab-sep::before { content: ""; position: absolute; left: -4px; top: 7px; width: 2px; height: 20px; background: #a8c7fa; border-radius: 1px; }
.tab-active { height: 43px; padding-bottom: 8px; background: #fff; border-radius: 12px 12px 0 0; color: #1f1f1f; }
.tab-active::before, .tab-active::after { content: ""; position: absolute; bottom: 0; width: 14px; height: 14px; }
.tab-active::before { left: -14px; background: radial-gradient(circle at 0 0, transparent 13px, #fff 14px); }
.tab-active::after { right: -14px; background: radial-gradient(circle at 100% 0, transparent 13px, #fff 14px); }
.fav { width: 20px; height: 20px; }
.tab-title { flex: 1; min-width: 0; overflow: hidden; white-space: nowrap; mask-image: linear-gradient(90deg, #000 85%, transparent); }
.tab-x svg { width: 16px; height: 16px; }
.tab-new { width: 36px; height: 36px; margin-left: 8px; }
.win-controls { display: flex; margin-left: auto; }
.win-controls button { width: 57px; height: 50px; }

.toolbar { display: flex; align-items: center; height: 59px; padding: 0 17px 0 18px; }
.nav-btns { display: flex; gap: 25px; width: 132px; }
.omnibox { display: flex; align-items: center; gap: 18px; flex: 1; min-width: 0; height: 42px; padding: 0 20px 0 7px; border-radius: 21px; background: #ecf1fa; }
.site-info { width: 30px; height: 30px; border-radius: 50%; background: #fff; }
.url { flex: 1; margin-left: -8px; font-size: 16px; white-space: nowrap; overflow: hidden; }
.url b { font-weight: 400; color: #1f1f1f; }
.extensions { display: flex; align-items: center; gap: 24px; padding: 0 20px 0 22px; }
.fd { width: 21px; height: 20px; background: #111; color: #fff; font-size: 13px; font-weight: 700; }
.profile { display: flex; align-items: center; gap: 22px; height: 24px; padding-left: 22px; border-left: 2px solid #d3e3fd; }

.bookmarks { display: flex; align-items: center; height: 42px; padding: 0 17px 8px 23px; }
.apps { padding-right: 19px; border-right: 2px solid #d3e3fd; height: 20px; }
.bm-list { display: flex; gap: 21px; padding-left: 17px; flex: 1; }
.bm-list a, .all-bm { display: flex; align-items: center; gap: 8px; white-space: nowrap; line-height: 20px; }
.bm-list .folder { padding-right: 4px; }
.bm-list .folder a, .all-bm { gap: 10px; }
.more { margin-right: 22px; }
.all-bm { padding-left: 20px; border-left: 2px solid #d3e3fd; }

/* Kibana page */
.viewport { display: flex; flex: 1; min-height: 0; }
.kibana { display: flex; flex-direction: column; flex: 1; min-width: 0; }
.k-top { display: flex; align-items: center; justify-content: space-between; height: 60px; flex: none; padding: 0 20px; background: #25282f; border-bottom: 1px solid #d3dae6; color: #fff; }
.k-logo { display: flex; align-items: center; gap: 10px; flex: 1; font: 400 28px/30px "Open Sans", sans-serif; }
.k-search { display: flex; align-items: center; gap: 6px; flex: 0 1 750px; height: 40px; margin-right: 10px; padding: 0 14px 0 10px; border: 1px solid #62656e; border-radius: 6px; font-size: 17px; }
.k-search input { flex: 1; min-width: 0; border: 0; padding: 0; background: none; outline: 0; }
.k-search input::placeholder { color: #c3c6cd; opacity: 1; }
.k-search kbd { font: 600 17px/20px "Inter", sans-serif; }
.k-actions { display: flex; align-items: center; justify-content: flex-end; gap: 20px; flex: 1; }
.k-actions button { width: 30px; height: 30px; }
.news { position: relative; }
.dot { position: absolute; left: 18px; top: -1px; width: 13px; height: 13px; border-radius: 50%; background: #bd3d76; }
.avatar { border-radius: 50%; background: #6092c0; color: #000; font-size: 15px; font-weight: 500; }
.k-sub { position: relative; z-index: 2; display: flex; align-items: center; height: 60px; flex: none; padding-left: 25px; background: #fff; border-bottom: 1px solid #d3dae6; box-shadow: 0 1px 4px rgba(0,0,0,.16), 0 4px 14px rgba(0,0,0,.1); }
.space { width: 30px; height: 30px; margin: 0 20px 0 25px; border-radius: 6px; background: #00bfb3; color: #000; font-size: 15px; font-weight: 500; }
.crumbs { display: flex; font-size: 15px; font-weight: 500; line-height: 30px; }
.crumbs a, .crumbs span { padding: 0 20px; color: #0061a6; background: #cce4f5; clip-path: polygon(0 0, calc(100% - 10px) 0, 100% 50%, calc(100% - 10px) 100%, 0 100%, 10px 50%); }
.crumbs a { margin-right: -5px; }
.crumbs a:first-child { padding-left: 15px; border-radius: 6px 0 0 6px; clip-path: polygon(0 0, calc(100% - 10px) 0, 100% 50%, calc(100% - 10px) 100%, 0 100%); }
.crumbs span { padding-right: 15px; border-radius: 0 6px 6px 0; color: #69707d; background: #e0e1e4; clip-path: polygon(0 0, 100% 0, 100% 100%, 0 100%, 10px 50%); }
.banner { height: 30px; flex: none; padding-left: 20px; background: #e6f1fa; }
.banner-btn { width: 140px; height: 10px; border-radius: 0 0 6px 6px; background: #c9e1f0; }

.k-body { display: flex; flex: 1; min-height: 0; }
.side { position: relative; display: flex; width: 310px; flex: none; background: linear-gradient(165deg, #e7eaf2 18px, transparent 19px), linear-gradient(154deg, #eceff6 48px, transparent 49px), #f7f8fc; }
.side-inner { flex: 1; min-width: 0; padding: 30px 0 0 30px; overflow: hidden; }
.side-title { display: flex; align-items: center; gap: 15px; font-size: 20px; line-height: 40px; color: #1a1c21; }
.side-icon { display: flex; align-items: center; justify-content: center; width: 40px; height: 40px; border-radius: 50%; background: #fff; box-shadow: 0 2px 6px rgba(0,0,0,.14); }
.side section { padding-top: 27px; font-size: 17px; }
.side h2 + section { padding-top: 28px; }
.side h3 { display: flex; align-items: center; gap: 8px; padding-bottom: 3px; font-size: 17px; line-height: 35px; font-weight: 700; }
.side h3 svg { margin-top: 2px; }
.side a { display: block; line-height: 35px; color: #343741; }
.side a.current { font-weight: 700; color: #006bb8; text-decoration: underline; }
.side-scroll { display: flex; flex-direction: column; align-items: center; width: 12px; padding-top: 6px; box-shadow: inset -3px 0 4px rgba(60,70,110,.08); }
.side-thumb { width: 10px; height: 356px; margin-top: 3px; background: #abafb8; align-self: flex-start; }
.arrow-up { border: 4px solid transparent; border-bottom: 5px solid #a2a6af; border-top: 0; }
.arrow-down { border: 5px solid transparent; border-top: 6px solid #a2a6af; border-bottom: 0; }

.main { position: relative; display: flex; flex-direction: column; flex: 1; min-width: 0; border-left: 1px solid #d3dae6; background: #fff; }
.panel { flex: 1; padding: 30px 30px 0; min-height: 0; }
.title-row { display: flex; align-items: center; justify-content: space-between; padding-right: 10px; }
h1 { font-size: 43px; line-height: 50px; font-weight: 700; color: #1a1c21; }
.docs { display: flex; align-items: center; gap: 10px; font-size: 17px; font-weight: 500; color: #0061a6; }
.k-tabs { display: flex; gap: 30px; margin-top: 30px; border-bottom: 1px solid #d3dae6; font-size: 20px; font-weight: 700; line-height: 50px; color: #1a1c21; }
.k-tabs a { padding: 0 5px; }
.k-tabs .on { color: #006bb8; box-shadow: inset 0 -2px #0077cc; }
.desc-row { display: flex; align-items: center; gap: 30px; margin-top: 30px; }
.desc-row p { flex: 1; font-size: 20px; line-height: 30px; color: #69707d; }
.desc-row p a { color: #006bb8; font-weight: 500; }
.desc-row p svg { display: inline; }
.switch { display: flex; align-items: center; gap: 10px; font-size: 17px; }
.switch input { position: relative; appearance: none; margin: 0; width: 55px; height: 25px; border-radius: 13px; background: #8f9196; }
.switch input::before { content: ""; position: absolute; left: 1px; top: 1px; width: 23px; height: 23px; border-radius: 50%; background: #fff; }
.switch input::after { content: ""; position: absolute; right: 9px; top: 6px; width: 13px; height: 13px; background: linear-gradient(45deg, transparent 46%, #fff 47% 53%, transparent 54%), linear-gradient(135deg, transparent 46%, #fff 47% 53%, transparent 54%); }
.filter-row { display: flex; gap: 20px; margin-top: 30px; height: 50px; font-size: 17px; }
.search { display: flex; align-items: center; gap: 9px; flex: 1; min-width: 0; padding: 0 14px; border: 1px solid #e2e5ea; border-radius: 8px; background: #fbfcfd; }
.search input { flex: 1; min-width: 0; border: 0; padding: 0; background: none; outline: 0; }
.search input::placeholder { color: #69707d; opacity: 1; }
.filters { display: flex; border: 1px solid #e2e5ea; border-radius: 8px; background: #fbfcfd; font-weight: 500; }
.filters button { justify-content: space-between; width: 184px; padding: 0 11px; }
.filters button + button { border-left: 1px solid #dfe2e8; }
.btn { gap: 10px; height: 50px; padding: 0 16px; border-radius: 8px; font-size: 17px; font-weight: 600; }
.btn-soft { background: #ccf2f0; color: #007871; font-weight: 500; }
.btn-fill { background: #0077cc; color: #fff; }

.grid { width: 100%; margin-top: 20px; border-collapse: collapse; table-layout: fixed; color: #1a1c21; }
.grid col { width: 158px; }
.grid .c-check { width: 40px; }
.grid .c-name { width: auto; }
.grid th { height: 40px; padding: 0 10px; border-bottom: 1px solid #d3dae6; text-align: left; }
.grid th button { gap: 8px; max-width: 134px; font-size: 15px; font-weight: 600; line-height: 20px; }
.grid th span { overflow: hidden; white-space: nowrap; text-overflow: ellipsis; }
.grid th input { appearance: none; display: block; width: 20px; height: 20px; margin: 0; border: 1px solid #8f939b; border-radius: 5px; background: #fff; }
.grid td { padding: 40px 0; border-bottom: 1px solid #d3dae6; text-align: center; }
.grid h2 { font-size: 34px; line-height: 40px; }
.grid p { padding: 20px 0 30px; font-size: 20px; line-height: 30px; color: #69707d; }
.grid .btn { margin: 0 auto; }

.console { display: flex; align-items: center; justify-content: space-between; height: 50px; flex: none; margin-left: -1px; padding: 0 20px 0 12px; background: #343641; color: #dfe5ef; font-size: 17px; font-weight: 600; }
.console button { gap: 12px; }
.console .nb { color: #7dded8; }
.assistant { position: absolute; right: 0; bottom: 37px; width: 50px; height: 45px; border-radius: 23px 0 0 23px; background: #fff; box-shadow: 0 0 40px rgba(0,0,0,.1); }

.page-scroll { display: flex; flex-direction: column; align-items: center; width: 20px; flex: none; padding: 9px 0; background: #eff0f5; }
.page-thumb { width: 17px; flex: 0 1 702px; margin: 107px 0 auto; background: #abafb8; }

/* Taskbar */
.taskbar { display: flex; align-items: center; height: 59px; border-top: 1px solid #b9babd; background: linear-gradient(90deg, #efebeb, #eeeaeb 180px, #dae4e9 380px, #d4e7ef 680px, #e0e9eb 1000px, #e6e7e7 1300px, #efeaeb 1700px, #f2e4e8); color: #1f1f1f; font-size: 14px; line-height: 20px; }
.weather { display: flex; align-items: center; gap: 12px; padding-left: 28px; flex: 1; }
.weather span { color: #5a5a5a; }
.dock { display: flex; align-items: center; flex: none; margin-right: 9px; }
.dock button { position: relative; width: 55px; height: 48px; border-radius: 6px; }
.dock button:first-child { width: 64px; }
.t-search { display: flex; align-items: center; gap: 12px; width: 273px; height: 38px; margin-right: 3px; padding: 0 14px; border: 1px solid #c3d3da; border-radius: 19px; background: #f3f8fb; font-size: 16px; }
.t-search input { flex: 1; min-width: 0; border: 0; padding: 0; background: none; outline: 0; }
.t-search input::placeholder { color: #5d5d5d; opacity: 1; }
.run::after { content: ""; position: absolute; bottom: 1px; left: 23px; width: 8px; height: 4px; border-radius: 2px; background: #868686; }
.dock .focus { background: #f5f6f6; }
.focus::after { left: 17px; width: 20px; background: #64798a; }
.pbadge { position: absolute; right: 4px; top: 3px; }
.m365 span { position: absolute; right: 12px; bottom: 9px; padding: 0 2px; border-radius: 2px; background: #000; color: #fff; font-size: 7px; line-height: 9px; font-weight: 700; }
.tray { display: flex; align-items: center; justify-content: flex-end; flex: 1; padding-right: 23px; }
.lang { margin: 0 22px 0 27px; }
.status { display: flex; gap: 10px; }
.clock { width: 98px; text-align: right; }
```
